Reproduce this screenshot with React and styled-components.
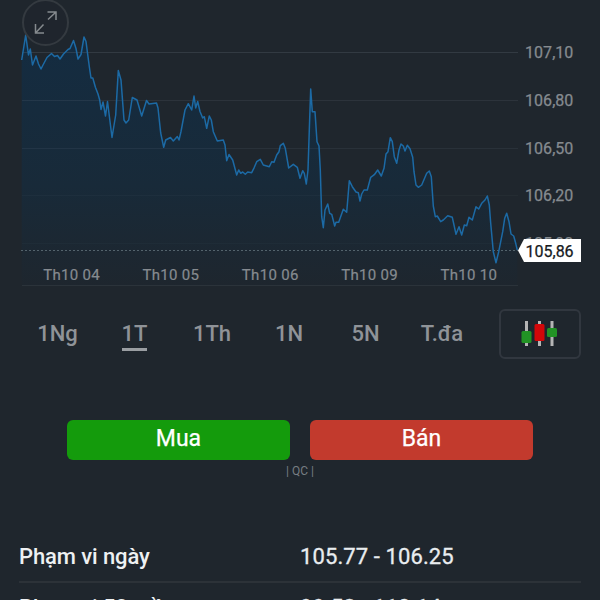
import React from "react";
import styled, { createGlobalStyle } from "styled-components";

const GlobalStyle = createGlobalStyle`
  * { box-sizing: border-box; }
  html, body { margin: 0; background: #1f262d; }
  body { font-family: Roboto, "Noto Sans", sans-serif; overflow: hidden; }
  button { font-family: inherit; padding: 0; border: 0; background: none; cursor: pointer; }
`;

const Page = styled.main`
  width: 600px;
  height: 600px;
  overflow: hidden;
  background: #1f262d;
  color: #fff;
`;

const ChartPanel = styled.section`
  display: grid;
  grid-template-columns: 518px 82px;
  height: 286px;
  position: relative;
`;

const PlotLayer = styled.svg`
  grid-area: 1 / 1;
  display: block;
  width: 518px;
  height: 286px;
`;

const DateAxis = styled.div`
  grid-area: 1 / 1;
  align-self: end;
  display: grid;
  grid-template-columns: repeat(5, 99.3px);
  padding-left: 22px;
  height: 24px;
  line-height: 27px;
  font-size: 15px;
  letter-spacing: 0.3px;
  color: #868b90;
  -webkit-text-stroke: 0.2px #868b90;
  text-align: center;
`;

const PriceAxis = styled.div`
  grid-area: 1 / 2;
  padding: 28px 0 0 7px;
  height: 250px;
  overflow: hidden;
`;

const PriceTick = styled.div`
  height: 47.8px;
  line-height: 49.5px;
  font-size: 16px;
  letter-spacing: 0.05px;
  color: #868b90;
  -webkit-text-stroke: 0.25px #868b90;
`;

const PriceTag = styled.div`
  position: absolute;
  left: 518px;
  top: 239px;
  width: 63px;
  height: 23px;
  padding-left: 7.5px;
  line-height: 26px;
  font-size: 16px;
  color: #16191c;
  -webkit-text-stroke: 0.25px #16191c;
  background: #fff;
  clip-path: polygon(0 50%, 6px 0, 100% 0, 100% 100%, 6px 100%);
`;

const ExpandButton = styled.button`
  position: absolute;
  left: 22px;
  top: -1px;
  width: 47px;
  height: 47px;
  border: 2px solid #343a40;
  border-radius: 50%;
  background: rgba(31, 38, 45, 0.8);
  svg { display: block; }
`;

const RangeBar = styled.nav`
  display: flex;
  align-items: center;
  height: 50px;
  margin-top: 23px;
  padding: 0 19px;
`;

const RangeCell = styled.div`
  width: ${(p) => p.$width || 77}px;
  display: flex;
  justify-content: center;
`;

const RangeButton = styled.button`
  height: 34px;
  padding-top: 2px;
  font-size: 22px;
  line-height: 29px;
  font-weight: 500;
  color: #8f9398;
  border-bottom: 3px solid ${(p) => (p.$active ? "#9a9ea2" : "transparent")};
`;

const CandleButton = styled.button`
  width: 82px;
  height: 50px;
  margin-left: auto;
  border: 2px solid #31373f;
  border-radius: 6px;
  svg { display: block; }
`;

const TradeRow = styled.div`
  display: grid;
  grid-template-columns: 223px 223px;
  gap: 20px;
  padding: 61px 0 0 67px;
`;

const TradeButton = styled.button`
  height: 40px;
  border-radius: 6px;
  background: ${(p) => p.$color};
  color: #fff;
  font-size: 23px;
  line-height: 36px;
  padding-bottom: 2px;
  -webkit-text-stroke: 0.25px #fff;
`;

const AdNote = styled.div`
  height: 20px;
  line-height: 22px;
  text-align: center;
  font-size: 12px;
  color: #777d82;
`;

const Stats = styled.dl`
  margin: 52px 19px 0;
`;

const StatRow = styled.div`
  display: grid;
  grid-template-columns: 281px 1fr;
  height: 51px;
  line-height: 50px;
  font-size: 22px;
  border-bottom: 2px solid #2c3238;
`;

const StatName = styled.dt`
  font-weight: 500;
  letter-spacing: -0.1px;
  color: #eef1f3;
`;

const StatValue = styled.dd`
  margin: 0;
  letter-spacing: 0.1px;
  color: #e9edf0;
  -webkit-text-stroke: 0.3px #e9edf0;
`;

const series = `21.7,60 25.7,35 28.5,55 30.3,49 32.5,65 36,56 38.5,64 41,69 43,65 47,57.5
51.5,53.5 54.5,56.5 57.5,55.5 60,59 63.5,54 68,49.5 70,48.5 73.5,40.5 76,48.5 78,59
81,54.5 84,37 86,41.5 87.5,53 89.5,68 91,78 92.8,78 95.5,87.5 98,94 99.7,100
101,109.5 103,102 105.5,116 107.5,101.5 112,137.5 115.7,115 118.3,70.5 121,80 124,120 126,123
128.7,120 132.3,97.5 137,100 141.7,116 146.5,100.5 149,104 156.5,103 158,108 160.7,133 163.7,147.3
165.7,140 170.5,137.5 173.3,141 177.3,136.5 179,140 181,131.5 185,110 188.3,103.7 191.7,110 194,96
195.7,108 197.7,101.5 200,111.5 202.7,118 204.3,116.7 206.7,128.3 209.3,116 211.3,120 213.3,131.7 217.3,141
223.3,140 225,145 226.7,160.7 229,154.5 232.7,160 236.7,175 238.7,170 240.7,173.3 242.7,172 245.3,174.3
247.7,172 251.7,172.7 254.3,167.3 256.7,161.7 260.3,159.3 263.3,165 269.3,166.7 271.7,161.7 274,162.3 276.7,155
279,151.7 280.3,145.7 283.3,143.3 285.3,148.3 288.7,168 293.3,164.3 297.3,167.3 300,178.3 302.7,170.7 304.3,173.3
306.3,184 308,170 309.3,130 310.7,89 312.3,111.7 315,111.7 317,141.7 319,146 320.3,170 321.7,216.7
323.3,227.7 325,210 327.7,204 329.7,213.3 331.7,214.3 334.7,226 336,222.3 338.7,222.3 343.3,209.3 346.7,212.3
348,196.7 349.3,180.7 352.3,186.7 356,192 358.3,192.7 360,201 361.7,194 364,190 367.3,190 370.7,177.3
374.3,174.7 377.7,170 381.3,176 384,168.3 386,154 388,151.7 390.3,137.7 392.3,141.7 394.3,156.7 396.7,163.3
399,150 401,144 403.3,146 405,151 407.3,145.3 410,148.7 412.7,157.3 414,171.7 416,185 418.3,187.3
421.7,185 426.7,173.3 429.3,171 431.3,176.7 433.3,206 435.3,216.7 437.3,216 440.7,221.7 443.3,220 447.7,215.7
452.3,217.3 454,225 456,234.3 459,226.7 461.7,235 464.3,225 466.7,225.7 469,217.3 472.3,220 476,206.7
478.7,209 481.7,203.3 485,200 487.3,196 489.3,205 490.7,223.3 493.3,251.7 496,262.7 498.7,251.7 502.7,231.7
504.7,218.3 506.7,213.3 509,221.7 511,234 513.7,236 515.7,243.3 517.3,250`;

const gridLines = [
  { y: 52.5, opacity: 0.18 },
  { y: 100.5, opacity: 0.12 },
  { y: 148.5, opacity: 0.1 },
  { y: 195.5, opacity: 0.05 },
  { y: 243.5, opacity: 0.04 },
];
const dates = ["Th10 04", "Th10 05", "Th10 06", "Th10 09", "Th10 10"];
const prices = ["107,10", "106,80", "106,50", "106,20", "105,90"];
const ranges = [
  { label: "1Ng", width: 77 },
  { label: "1T", width: 77, active: true },
  { label: "1Th", width: 78 },
  { label: "1N", width: 76 },
  { label: "5N", width: 77 },
  { label: "T.đa", width: 76 },
];
const candles = [
  { x: 25.5, top: 10, bottom: 35, bodyTop: 20, bodyBottom: 32, color: "#229325" },
  { x: 38.5, top: 10, bottom: 35, bodyTop: 13, bodyBottom: 30, color: "#d30709" },
  { x: 51, top: 10, bottom: 35, bodyTop: 17, bodyBottom: 26, color: "#229325" },
];
const stats = [
  ["Phạm vi ngày", "105.77 - 106.25"],
  ["Phạm vi 52 tuần", "99.58 - 110.14"],
];

function PriceChart() {
  return (
    <ChartPanel>
      <PlotLayer viewBox="0 0 518 286">
        <defs>
          <linearGradient id="fill" x1="0" y1="35" x2="0" y2="286" gradientUnits="userSpaceOnUse">
            <stop offset="0" stopColor="#142c41" />
            <stop offset="0.6" stopColor="#182a39" />
            <stop offset="1" stopColor="#1e262e" />
          </linearGradient>
        </defs>
        <polygon points={`21.7,286 ${series} 517.3,286`} fill="url(#fill)" />
        {gridLines.map((g) => (
          <path key={g.y} d={`M22 ${g.y}H518`} stroke="#8a98a4" strokeOpacity={g.opacity} />
        ))}
        <path d="M22 285.5H518" stroke="#2b333a" />
        <path d="M21 250.5H518" stroke="#53636c" strokeWidth="1.2" strokeDasharray="2 2" />
        <polyline points={series} fill="none" stroke="#1c6aa5" strokeWidth="1.5" strokeLinejoin="round" />
      </PlotLayer>
      <DateAxis>
        {dates.map((d) => <span key={d}>{d}</span>)}
      </DateAxis>
      <PriceAxis>
        {prices.map((p) => <PriceTick key={p}>{p}</PriceTick>)}
      </PriceAxis>
      <PriceTag>105,86</PriceTag>
      <ExpandButton aria-label="expand">
        <svg width="43" height="43" viewBox="0 0 43 43" fill="none" stroke="#858a8e" strokeWidth="1.5">
          <path d="M24 18.5L32 11M23.5 11H32V19M19.5 23.5L11.5 32M11.5 23V32H20" />
        </svg>
      </ExpandButton>
    </ChartPanel>
  );
}

export default function App() {
  return (
    <>
      <GlobalStyle />
      <Page>
        <PriceChart />
        <RangeBar>
          {ranges.map((r) => (
            <RangeCell key={r.label} $width={r.width}>
              <RangeButton $active={r.active}>{r.label}</RangeButton>
            </RangeCell>
          ))}
          <CandleButton aria-label="candles">
            <svg width="78" height="46" viewBox="0 0 78 46">
              {candles.map((c) => (
                <g key={c.x}>
                  <rect x={c.x - 1.5} y={c.top} width="3" height={c.bottom - c.top} fill="#b5b5b5" />
                  <rect x={c.x - 5} y={c.bodyTop} width="10" height={c.bodyBottom - c.bodyTop} rx="1.5" fill={c.color} />
                </g>
              ))}
            </svg>
          </CandleButton>
        </RangeBar>
        <TradeRow>
          <TradeButton $color="#149b0c">Mua</TradeButton>
          <TradeButton $color="#c23a2d">Bán</TradeButton>
        </TradeRow>
        <AdNote>| QC |</AdNote>
        <Stats>
          {stats.map(([name, value]) => (
            <StatRow key={name}>
              <StatName>{name}</StatName>
              <StatValue>{value}</StatValue>
            </StatRow>
          ))}
        </Stats>
      </Page>
    </>
  );
}
